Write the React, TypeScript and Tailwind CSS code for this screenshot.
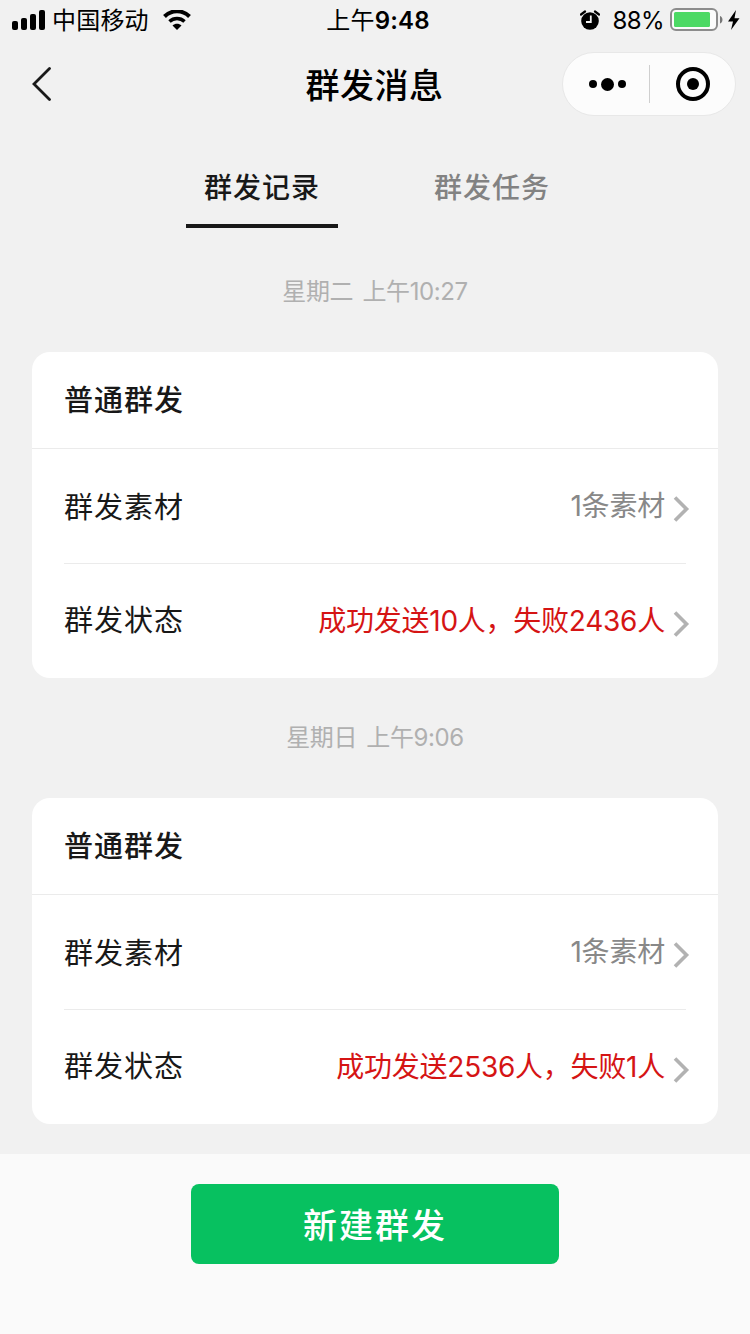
const broadcasts = [
  { time: "星期二 上午10:27", material: "1条素材", status: "成功发送10人，失败2436人" },
  { time: "星期日 上午9:06", material: "1条素材", status: "成功发送2536人，失败1人" },
];

function StatusBar() {
  return (
    <div className="flex h-10 items-center justify-between pr-2.5 pl-3 text-2xl text-black">
      <div className="flex w-[240px] items-center">
        <svg width="34" height="20" viewBox="0 0 34 20">
          <rect x="0" y="11" width="6" height="9" rx="2" />
          <rect x="9" y="8" width="6" height="12" rx="2" />
          <rect x="18" y="4" width="6" height="16" rx="2" />
          <rect x="27" y="0" width="6" height="20" rx="2" />
        </svg>
        <span className="ml-1.5 pt-0.5 leading-10 tracking-[0.2px]">中国移动</span>
        <svg className="ml-3.5" width="28" height="20" viewBox="0 0 28 20" fill="none" stroke="#000">
          <path d="M1.5 6.5C8.5-.5 19.5-.5 26.500 6.500" strokeWidth="4" />
          <path d="M6.500 11.500C10.700 7.500 17.300 7.500 21.500 11.500" strokeWidth="3.500" />
          <path d="M14 20L9.500 15.400C12 13.200 16 13.200 18.500 15.400Z" fill="#000" stroke="none" />
        </svg>
      </div>
      <div className="pt-0.5 pl-1 leading-10 tracking-[0.2px]">
        上午<span className="font-semibold">9:48</span>
      </div>
      <div className="flex w-[240px] items-center justify-end">
        <svg width="20" height="20" viewBox="0 0 20 20">
          <circle cx="10" cy="11" r="8.800" />
          <path d="M1 4.500L5 1.500M15 1.500L19 4.500" stroke="#000" strokeWidth="2.200" strokeLinecap="round" />
          <path d="M10.800 5.500V12H6" fill="none" stroke="#f1f1f1" strokeWidth="1.800" />
        </svg>
        <span className="ml-[13px] pt-0.5 leading-10 tracking-[-0.6px]">88%</span>
        <svg className="ml-1.5" width="53" height="24" viewBox="0 0 53 24">
          <rect x="1" y="1" width="46" height="21" rx="5" fill="#fbfbfb" stroke="#8c8c8c" strokeWidth="2" />
          <rect x="4" y="4" width="36" height="15" rx="1.500" fill="#4cd964" />
          <path d="M50 8C53.300 9 53.300 14.500 50 15.500Z" fill="#777" />
        </svg>
        <svg className="ml-1" width="13" height="20" viewBox="0 0 13 20">
          <path d="M9 0L1 11.500H6L4 20L12.500 8.200H7.500Z" />
        </svg>
      </div>
    </div>
  );
}

function NavBar() {
  return (
    <div className="flex h-[88px] items-center justify-between pr-3.5 pl-8">
      <div className="w-[155px]">
        <svg width="20" height="34" viewBox="0 0 20 34" fill="none" stroke="#1a1a1a" strokeWidth="2.800" strokeLinecap="round">
          <path d="M17.500 1.500L2 17L17.500 32.500" />
        </svg>
      </div>
      <h1 className="pt-1 text-[34px] leading-[48px] font-medium tracking-[0.5px] text-black">群发消息</h1>
      <div className="flex h-16 w-[174px] items-center rounded-full border border-[#e8e8e8] bg-[#fcfcfc]">
        <div className="flex w-[86px] items-center justify-center gap-1 pl-[3px]">
          <span className="size-2 rounded-full bg-black" />
          <span className="size-[13px] rounded-full bg-black" />
          <span className="size-2 rounded-full bg-black" />
        </div>
        <div className="h-[38px] w-px bg-[#cfcfcf]" />
        <div className="flex flex-1 items-center justify-center">
          <div className="flex size-[34px] items-center justify-center rounded-full border-4 border-black">
            <span className="size-3 rounded-full bg-black" />
          </div>
        </div>
      </div>
    </div>
  );
}

function Chevron() {
  return (
    <svg className="mt-1.5 -mr-1 ml-2 shrink-0" width="17" height="26" viewBox="0 0 17 26" fill="none" stroke="#b2b2b2" strokeWidth="3.600">
      <path d="M2 1.500L13.500 13L2 24.500" />
    </svg>
  );
}

function BroadcastCard({ material, status }: { material: string; status: string }) {
  return (
    <section className="mx-8 h-[326px] rounded-[18px] bg-white text-[29px] tracking-[1px] text-[#181818]">
      <h2 className="h-[97px] border-b border-[#ebebeb] pl-8 leading-[98px] font-medium">普通群发</h2>
      <div className="mx-8 flex h-[115px] items-center border-b border-[#ebebeb]">
        <span className="flex-1 pt-[3px]">群发素材</span>
        <span className="text-[28px] tracking-[-0.2px] text-[#888]">{material}</span>
        <Chevron />
      </div>
      <div className="mx-8 flex h-[114px] items-center">
        <span className="flex-1">群发状态</span>
        <span className="text-[28px] tracking-[-0.25px] text-[#d51414]">{status}</span>
        <Chevron />
      </div>
    </section>
  );
}

export default function App() {
  return (
    <div className="flex h-[1334px] w-[750px] flex-col overflow-hidden bg-[#f1f1f1] font-['Inter','Noto_Sans_CJK_SC',sans-serif]">
      <StatusBar />
      <NavBar />

      {/* Tabs */}
      <div className="flex h-[100px] gap-[78px] pl-[186px] text-center text-[28px] font-medium tracking-[1px]">
        <div className="w-[152px] border-b-4 border-[#181818] leading-[120px] text-[#181818]">群发记录</div>
        <div className="w-[152px] leading-[120px] text-[#828282]">群发任务</div>
      </div>

      {/* Broadcast history */}
      <main className="h-[926px]">
        {broadcasts.map((item) => (
          <div key={item.time} className="mb-[-4px]">
            <p className="h-[124px] text-center text-2xl leading-[128px] tracking-[-0.4px] text-[#b0b0b0] [word-spacing:3px]">
              {item.time}
            </p>
            <BroadcastCard material={item.material} status={item.status} />
          </div>
        ))}
      </main>

      {/* Bottom action */}
      <footer className="flex h-[180px] shrink-0 justify-center bg-[#fafafa] pt-[30px]">
        <button className="h-20 w-[368px] rounded-lg bg-[#07c160] pt-0.5 text-[34px] font-medium tracking-[2px] text-white">
          新建群发
        </button>
      </footer>
    </div>
  );
}
